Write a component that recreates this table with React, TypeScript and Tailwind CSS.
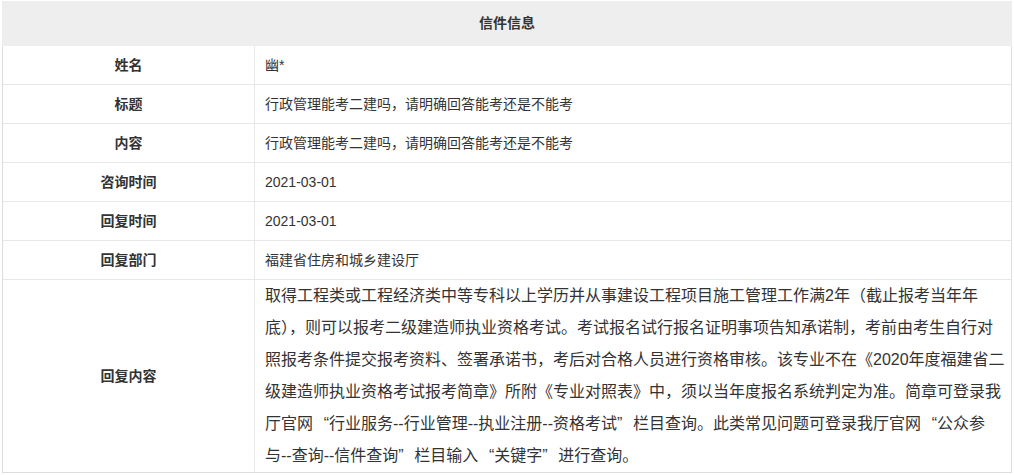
import type { ReactNode } from "react";

const rows: { label: string; value: string }[] = [
  { label: "姓名", value: "幽*" },
  { label: "标题", value: "行政管理能考二建吗，请明确回答能考还是不能考" },
  { label: "内容", value: "行政管理能考二建吗，请明确回答能考还是不能考" },
  { label: "咨询时间", value: "2021-03-01" },
  { label: "回复时间", value: "2021-03-01" },
  { label: "回复部门", value: "福建省住房和城乡建设厅" },
];

// lines broken where the original page breaks them
const replyLines = [
  "取得工程类或工程经济类中等专科以上学历并从事建设工程项目施工管理工作满2年（截止报考当年年",
  "底），则可以报考二级建造师执业资格考试。考试报名试行报名证明事项告知承诺制，考前由考生自行对",
  "照报考条件提交报考资料、签署承诺书，考后对合格人员进行资格审核。该专业不在《2020年度福建省二",
  "级建造师执业资格考试报考简章》所附《专业对照表》中，须以当年度报名系统判定为准。简章可登录我",
  "厅官网“行业服务--行业管理--执业注册--资格考试”栏目查询。此类常见问题可登录我厅官网“公众参",
  "与--查询--信件查询”栏目输入“关键字”进行查询。",
];

export default function App() {
  return (
    <div
      className="min-h-[475px] bg-white pt-[1px] pl-[2px] text-[#333]"
      style={{ fontFamily: '"Liberation Sans", "Noto Sans CJK SC", sans-serif' }}
    >
      <div className="w-[1010px]">
        <div className="flex h-[45px] items-center justify-center bg-[#eeeeee] text-[14px] font-bold">
          信件信息
        </div>
        <div className="border-x border-b border-[#dddddd]">
          {rows.map((row) => (
            <Row key={row.label} label={row.label}>
              <span className="text-[14px]">{row.value}</span>
            </Row>
          ))}
          <Row label="回复内容" last>
            <p className="text-[16px] leading-[32px]">
              {replyLines.map((line, i) => (
                <span key={i} className="block whitespace-nowrap">
                  {withQuotes(line)}
                </span>
              ))}
            </p>
          </Row>
        </div>
      </div>
    </div>
  );
}

function withQuotes(line: string) {
  return line.split(/([“”])/).map((part, i) => {
    if (part === "“") {
      return (
        <span key={i} className="inline-block w-[16px] text-right">
          “
        </span>
      );
    }
    if (part === "”") {
      return (
        <span key={i} className="inline-block w-[16px] text-left">
          ”
        </span>
      );
    }
    return part;
  });
}

function Row({ label, children, last }: { label: string; children: ReactNode; last?: boolean }) {
  return (
    <div className={last ? "flex h-[192px]" : "flex h-[39px] border-b border-[#e8e8e8]"}>
      <div className="flex w-[252px] shrink-0 items-center justify-center border-r border-[#e8e8e8] text-[14px] font-bold">
        {label}
      </div>
      <div className="flex flex-1 items-center pl-[10px] pr-[6px]">{children}</div>
    </div>
  );
}
